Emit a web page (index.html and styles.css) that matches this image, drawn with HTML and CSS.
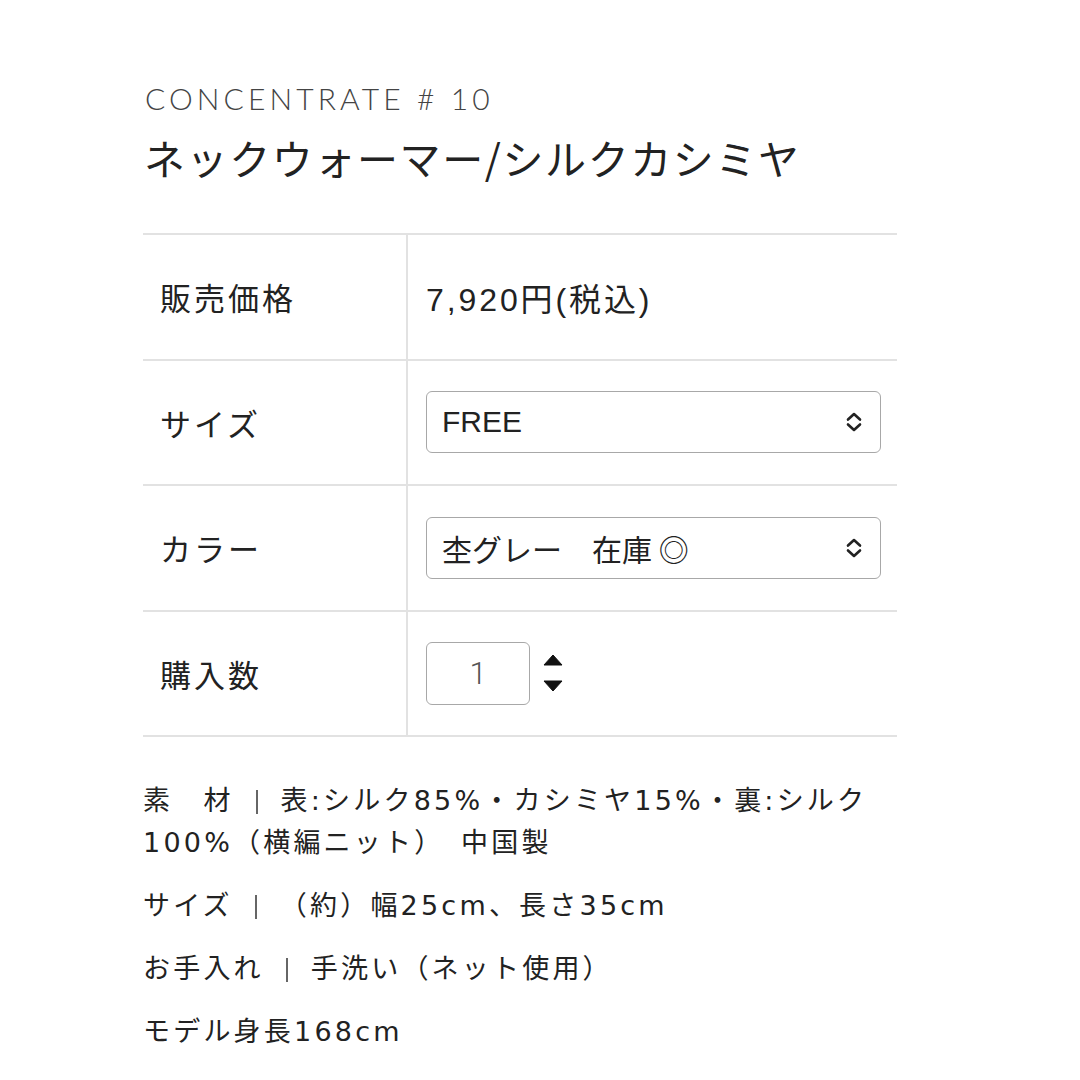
FILE: index.html
```html
<!DOCTYPE html>
<html lang="ja">
<head>
<meta charset="utf-8">
<link rel="stylesheet" href="styles.css">
</head>
<body>
<div class="page">
  <div class="brand">CONCENTRATE # 10</div>
  <h1 class="title">ネックウォーマー/シルクカシミヤ</h1>

  <div class="table">
    <div class="row">
      <div class="label">販売価格</div>
      <div class="value"><span class="price">7,920円(税込)</span></div>
    </div>
    <div class="row">
      <div class="label">サイズ</div>
      <div class="value">
        <div class="select">
          <span class="select-text latin">FREE</span>
          <svg class="chev" viewBox="0 0 20 24" width="20" height="24"><path d="M4 9.5 L10 4 L16 9.5 M4 14.5 L10 20 L16 14.5" fill="none" stroke="#222" stroke-width="2.6" stroke-linecap="round" stroke-linejoin="round"/></svg>
        </div>
      </div>
    </div>
    <div class="row">
      <div class="label">カラー</div>
      <div class="value">
        <div class="select">
          <span class="select-text">杢グレー　在庫 ◎</span>
          <svg class="chev" viewBox="0 0 20 24" width="20" height="24"><path d="M4 9.5 L10 4 L16 9.5 M4 14.5 L10 20 L16 14.5" fill="none" stroke="#222" stroke-width="2.6" stroke-linecap="round" stroke-linejoin="round"/></svg>
        </div>
      </div>
    </div>
    <div class="row">
      <div class="label">購入数</div>
      <div class="value">
        <div class="qty">1</div>
        <div class="spin">
          <svg viewBox="0 0 20 12" width="20" height="12"><path d="M10 1 L19 11 L1 11 Z" fill="#111" stroke="#111" stroke-width="1" stroke-linejoin="round"/></svg>
          <svg viewBox="0 0 20 12" width="20" height="12"><path d="M1 1 L19 1 L10 11 Z" fill="#111" stroke="#111" stroke-width="1" stroke-linejoin="round"/></svg>
        </div>
      </div>
    </div>
  </div>

  <div class="details">
    <p>素　材<span class="bar"></span>表:シルク85%・カシミヤ15%・裏:シルク<br>100%（横編ニット）　中国製</p>
    <p>サイズ<span class="bar"></span>（約）幅25cm、長さ35cm</p>
    <p>お手入れ<span class="bar"></span>手洗い（ネット使用）</p>
    <p>モデル身長168cm</p>
  </div>
</div>
</body>
</html>
```

FILE: styles.css
```css
* { box-sizing: border-box; }
html, body { margin: 0; padding: 0; background: #fff; }
body {
  font-family: "Noto Sans CJK JP", "Noto Sans", sans-serif;
  color: #222;
}
.page {
  width: 754px;
  margin-left: 143px;
  padding-top: 78px;
}
.brand {
  font-family: "Lato", "Noto Sans", sans-serif;
  font-weight: 300;
  font-size: 30px;
  letter-spacing: 4.1px;
  color: #444;
  line-height: 40px;
  padding-left: 2px;
}
.title {
  margin: 14px 0 0;
  font-weight: 400;
  font-size: 41px;
  letter-spacing: 1.6px;
  line-height: 50px;
  color: #222;
  padding-left: 1px;
}
.table {
  margin-top: 51px;
  border-top: 2px solid #e2e2e2;
}
.row {
  display: grid;
  grid-template-columns: 263px 1fr;
  height: 125.5px;
  border-bottom: 2px solid #e2e2e2;
}
.label {
  display: flex;
  align-items: center;
  padding-left: 17px;
  font-size: 31px;
  letter-spacing: 3px;
  color: #222;
}
.value {
  display: flex;
  align-items: center;
  border-left: 2px solid #e2e2e2;
  padding-left: 18px;
}
.price {
  font-family: "Liberation Sans", "Noto Sans CJK JP", sans-serif;
  font-size: 32px;
  letter-spacing: 2.9px;
  color: #222;
}
.latin {
  font-family: "Liberation Sans", "Noto Sans CJK JP", sans-serif;
}
.select {
  width: 455px;
  height: 62px;
  border: 1.5px solid #a8a8a8;
  border-radius: 6px;
  display: flex;
  align-items: center;
  justify-content: space-between;
  padding: 0 16px 0 15px;
}
.select-text {
  font-size: 30px;
  color: #222;
}
.chev { display: block; }
.qty {
  width: 104px;
  height: 63px;
  border: 1.5px solid #a8a8a8;
  border-radius: 6px;
  display: flex;
  align-items: center;
  justify-content: center;
  font-family: "Roboto", "Liberation Sans", sans-serif;
  font-weight: 300;
  font-size: 31px;
  color: #555;
}
.spin {
  display: flex;
  flex-direction: column;
  gap: 14px;
  margin-left: 13px;
}
.spin svg { display: block; }
.details {
  margin-top: 43px;
  font-family: "DejaVu Sans", "Noto Sans CJK JP", sans-serif;
  font-size: 27px;
  letter-spacing: 3.2px;
  line-height: 42px;
  color: #222;
}
.details p { margin: 0 0 21px; }
.bar {
  display: inline-block;
  width: 2px;
  height: 24px;
  background: #666;
  margin: 0 23px 0 22px;
  vertical-align: -4px;
}
```
